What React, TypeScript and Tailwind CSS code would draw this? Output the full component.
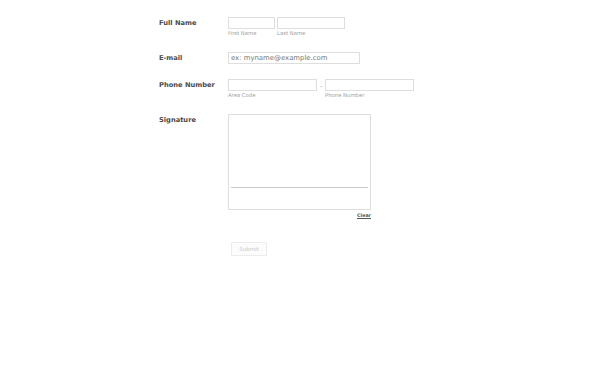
import React from "react";

const font = { fontFamily: '"DejaVu Sans", Verdana, sans-serif' };

function Label({ children }: { children: React.ReactNode }) {
  return (
    <div className="w-[69px] shrink-0 h-[12px] leading-[13px] text-[6.7px] font-bold text-[#4a4a4a]">
      {children}
    </div>
  );
}

function Sub({ children }: { children: React.ReactNode }) {
  return <div className="h-[8px] leading-[9px] text-[5.3px] text-[#a0a0a0]">{children}</div>;
}

export default function App() {
  return (
    <div className="w-[608px] h-[380px] bg-white" style={font}>
      <div className="mx-auto w-[290px] pt-[17px] flex flex-col">
        <div className="flex">
          <Label>Full Name</Label>
          <div className="flex gap-[2px]">
            <div className="flex flex-col">
              <div className="w-[47px] h-[12px] border border-[#dedede] bg-white" />
              <Sub>First Name</Sub>
            </div>
            <div className="flex flex-col">
              <div className="w-[68px] h-[12px] border border-[#dedede] bg-white" />
              <Sub>Last Name</Sub>
            </div>
          </div>
        </div>

        <div className="flex mt-[15px]">
          <Label>E-mail</Label>
          <div className="w-[132px] h-[12px] border border-[#dedede] bg-white flex items-center pl-[2px] text-[6.9px] text-[#777] leading-none">
            ex: myname@example.com
          </div>
        </div>

        <div className="flex mt-[15px]">
          <Label>Phone Number</Label>
          <div className="flex">
            <div className="flex flex-col">
              <div className="w-[89px] h-[12px] border border-[#dedede] bg-white" />
              <Sub>Area Code</Sub>
            </div>
            <div className="w-[8px] h-[12px] flex items-center justify-center text-[6px] text-[#888]">-</div>
            <div className="flex flex-col">
              <div className="w-[89px] h-[12px] border border-[#dedede] bg-white" />
              <Sub>Phone Number</Sub>
            </div>
          </div>
        </div>

        <div className="flex mt-[15px]">
          <Label>Signature</Label>
          <div className="flex flex-col w-[143px]">
            <div className="h-[96px] border border-[#dedede] bg-white flex flex-col px-[2px] pt-[72px]">
              <div className="h-[1px] bg-[#cacaca]" />
            </div>
            <div className="flex justify-end mt-[2px]">
              <span className="text-[4.8px] font-bold text-[#555] underline leading-[8px]">Clear</span>
            </div>
          </div>
        </div>

        <div className="flex mt-[22px]">
          <div className="w-[72px] shrink-0" />
          <div className="w-[36px] h-[14px] border border-[#ececec] bg-[#fcfcfc] rounded-[1px] flex items-center justify-center text-[5.5px] text-[#c8c8c8]">
            Submit
          </div>
        </div>
      </div>
    </div>
  );
}
